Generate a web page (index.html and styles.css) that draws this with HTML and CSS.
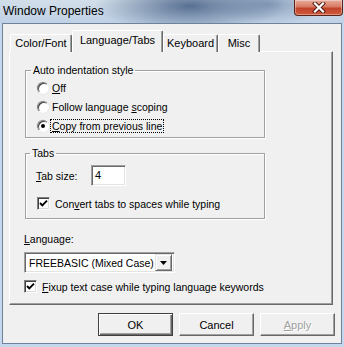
FILE: index.html
```html
<!DOCTYPE html>
<html lang="en">
<head>
  <meta charset="UTF-8">
  <title>Window Properties</title>
  <link rel="stylesheet" href="styles.css">
</head>
<body>
  <div class="window">
    <div class="titlebar">
      <span class="title">Window Properties</span>
      <div class="close">
        <svg width="14" height="11" viewBox="0 0 14 11">
          <path d="M3 1.5 L11 9.5 M11 1.5 L3 9.5" stroke="#4a1a12" stroke-width="4" stroke-linecap="square"/>
          <path d="M3 1.5 L11 9.5 M11 1.5 L3 9.5" stroke="#fff" stroke-width="2.2" stroke-linecap="square"/>
        </svg>
      </div>
    </div>

    <div class="client">
      <div class="tabstrip">
        <div class="tab t1">Color/Font</div>
        <div class="tab t2 selected">Language/Tabs</div>
        <div class="tab t3">Keyboard</div>
        <div class="tab t4">Misc</div>
      </div>

      <div class="tabpage">
        <fieldset class="group g1">
          <legend>Auto indentation style</legend>
          <div class="option"><span class="radio"></span><span><u>O</u>ff</span></div>
          <div class="option"><span class="radio"></span><span>Follow language <u>s</u>coping</span></div>
          <div class="option"><span class="radio checked"></span><span class="focus"><u>C</u>opy from previous line</span></div>
        </fieldset>

        <fieldset class="group g2">
          <legend>Tabs</legend>
          <div class="field-row">
            <span class="field-label"><u>T</u>ab size:</span>
            <span class="textbox">4</span>
          </div>
          <div class="check-row indent">
            <span class="checkbox">
              <svg width="11" height="11" viewBox="0 0 11 11"><path d="M2 5 L4.3 7.3 L9 2.6" fill="none" stroke="#000" stroke-width="1.9"/></svg>
            </span>
            <span>Con<u>v</u>ert tabs to spaces while typing</span>
          </div>
        </fieldset>

        <div class="lang">
          <div class="lang-label"><u>L</u>anguage:</div>
          <div class="combo">
            <span class="combo-text">FREEBASIC (Mixed Case)</span>
            <span class="combo-btn">
              <svg width="7" height="4" viewBox="0 0 7 4"><path d="M0 0 H7 L3.5 4 Z" fill="#000"/></svg>
            </span>
          </div>
          <div class="check-row">
            <span class="checkbox">
              <svg width="11" height="11" viewBox="0 0 11 11"><path d="M2 5 L4.3 7.3 L9 2.6" fill="none" stroke="#000" stroke-width="1.9"/></svg>
            </span>
            <span><u>F</u>ixup text case while typing language keywords</span>
          </div>
        </div>
      </div>

      <div class="buttons">
        <button class="btn default">OK</button>
        <button class="btn">Cancel</button>
        <button class="btn disabled"><u>A</u>pply</button>
      </div>
    </div>
  </div>
</body>
</html>
```

FILE: styles.css
```css
body {
  margin: 0;
  font-family: "Liberation Sans", Arial, sans-serif;
  font-size: 10.5px;
  color: #000;
}
.window {
  width: 344px;
  height: 347px;
  display: flex;
  flex-direction: column;
  background: #c4d7ec;
}
.titlebar {
  height: 23px;
  display: flex;
  align-items: flex-start;
  background:
    radial-gradient(ellipse 95px 26px at 190px 6px, rgba(38, 66, 110, 0.7), rgba(60, 90, 135, 0) 100%),
    radial-gradient(ellipse 60px 20px at 270px 4px, rgba(70, 100, 145, 0.5), rgba(70, 100, 145, 0) 100%),
    linear-gradient(#d2dee9, #bfd1e5);
}
.title {
  font-size: 12px;
  padding: 4px 0 0 3px;
  color: #000;
}
.close {
  margin-left: auto;
  margin-right: 1px;
  width: 47px;
  height: 15px;
  border: 1px solid #5b2419;
  border-top: none;
  border-radius: 0 0 4px 4px;
  background: linear-gradient(#e8ab9a 0%, #d87a63 45%, #c2432a 55%, #cf5a3e 100%);
  box-shadow: inset 0 0 0 1px rgba(255, 255, 255, 0.35);
  display: flex;
  align-items: center;
  justify-content: center;
}
.client {
  flex: 1;
  margin: 0 2px 3px;
  border: 1px solid #6f8299;
  background: #f0f0f0;
  padding: 7px 6px 0 6px;
  display: flex;
  flex-direction: column;
}
.tabstrip {
  display: flex;
  align-items: flex-end;
  height: 21px;
  padding-left: 1px;
  margin-bottom: -1px;
  position: relative;
  z-index: 1;
  font-size: 11px;
}
.tab {
  box-sizing: border-box;
  height: 18px;
  border: 1px solid;
  border-color: #fff #696969 transparent #fff;
  border-bottom: none;
  border-radius: 2px 2px 0 0;
  box-shadow: inset -1px 0 #a0a0a0;
  background: #f0f0f0;
  text-align: center;
  padding-top: 2px;
}
.t1 { width: 62px; }
.t2 { width: 91px; }
.t3 { width: 55px; }
.t4 { width: 42px; }
.tab.selected {
  height: 22px;
  padding-top: 3px;
}
.tabpage {
  box-sizing: border-box;
  width: 324px;
  height: 254px;
  border: 1px solid;
  border-color: #fff #696969 #696969 #fff;
  box-shadow: inset -1px -1px #a0a0a0;
  padding: 12px 0 0 15px;
}
.group {
  box-sizing: border-box;
  width: 240px;
  margin: 0;
  border: 1px solid #a0a0a0;
  box-shadow: 1px 1px 0 #fff, inset 1px 1px 0 #fff;
  padding: 1px 0 2px 11px;
  min-inline-size: 0;
}
.group legend {
  margin-left: -6px;
  padding: 0 2px;
  line-height: 13px;
}
.g2 {
  margin-top: 9px;
  padding: 0 0 8px 10px;
}
.option {
  display: flex;
  align-items: center;
  height: 19px;
}
.radio {
  box-sizing: border-box;
  width: 12px;
  height: 12px;
  margin-right: 3px;
  border-radius: 50%;
  border: 1px solid;
  border-color: #808080 #fff #fff #808080;
  background: #fff;
  box-shadow: inset 1px 1px 0 #404040, 0 0 0 0.5px #dcdcdc;
  display: flex;
  align-items: center;
  justify-content: center;
}
.radio.checked::after {
  content: "";
  width: 4px;
  height: 4px;
  border-radius: 50%;
  background: #000;
}
.focus {
  outline: 1px dotted #000;
  outline-offset: 0;
  padding: 0 1px;
  margin-left: -1px;
}
.field-row {
  display: flex;
  align-items: center;
  margin-top: 5px;
  height: 21px;
}
.field-label {
  width: 55px;
}
.textbox {
  box-sizing: border-box;
  width: 35px;
  height: 21px;
  border: 1px solid;
  border-color: #a0a0a0 #fff #fff #a0a0a0;
  box-shadow: inset 1px 1px 0 #696969, inset -1px -1px 0 #e3e3e3;
  background: #fff;
  padding: 3px 0 0 3px;
  font-size: 11px;
}
.check-row {
  display: flex;
  align-items: center;
  height: 13px;
  margin-top: 11px;
}
.check-row.indent {
  margin-left: 1px;
}
.checkbox {
  box-sizing: border-box;
  width: 13px;
  height: 13px;
  margin-right: 5px;
  border: 1px solid;
  border-color: #808080 #fff #fff #808080;
  box-shadow: inset 1px 1px 0 #404040, inset -1px -1px 0 #dcdcdc;
  background: #fff;
  display: flex;
  align-items: center;
  justify-content: center;
}
.lang {
  margin-left: -1px;
}
.lang-label {
  margin-top: 14px;
  line-height: 13px;
}
.combo {
  box-sizing: border-box;
  width: 151px;
  height: 21px;
  margin-top: 6px;
  border: 1px solid;
  border-color: #a0a0a0 #fff #fff #a0a0a0;
  box-shadow: inset 1px 1px 0 #696969, inset -1px -1px 0 #e3e3e3;
  background: #fff;
  display: flex;
  align-items: center;
  padding: 2px;
  white-space: nowrap;
}
.combo-text {
  flex: 1;
  padding-left: 2px;
}
.combo-btn {
  box-sizing: border-box;
  width: 17px;
  height: 17px;
  background: #f0f0f0;
  border: 1px solid;
  border-color: #e3e3e3 #696969 #696969 #e3e3e3;
  box-shadow: inset 1px 1px 0 #fff, inset -1px -1px 0 #a0a0a0;
  display: flex;
  align-items: center;
  justify-content: center;
}
.lang .check-row {
  margin-top: 7px;
}
.buttons {
  display: flex;
  justify-content: flex-end;
  gap: 6px;
  margin-top: 8px;
}
.btn {
  box-sizing: border-box;
  width: 75px;
  height: 23px;
  margin: 0;
  padding: 0;
  font: inherit;
  font-size: 11px;
  color: #000;
  background: #f0f0f0;
  border: 1px solid;
  border-color: #fff #696969 #696969 #fff;
  box-shadow: inset -1px -1px 0 #a0a0a0;
}
.btn.default {
  border: 1px solid #404040;
  box-shadow: inset 1px 1px 0 #fff, inset -1px -1px 0 #696969, inset -2px -2px 0 #a0a0a0;
}
.btn.disabled {
  color: #a0a0a0;
  text-shadow: 1px 1px 0 #fff;
}
```
